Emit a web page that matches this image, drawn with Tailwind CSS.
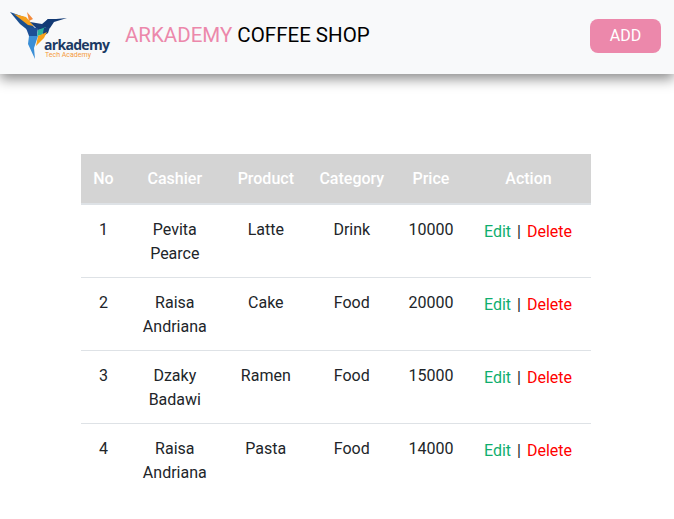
<!DOCTYPE html>
<html lang="en">
<head>
  <meta charset="UTF-8" />
  <meta name="viewport" content="width=device-width, initial-scale=1.0" />
  <title>Arkademy Coffee Shop</title>
  <script src="https://cdn.jsdelivr.net/npm/@tailwindcss/browser@4"></script>
</head>
<body class="min-h-screen bg-white font-['Roboto',sans-serif] text-[16px] leading-6 text-[#212529] overflow-hidden">

  <!-- navbar -->
  <nav class="flex items-center justify-between h-[74px] pl-[10px] pr-[13px] bg-[#f8f9fa] shadow-[0_5px_12px_rgba(0,0,0,0.45)]">
    <div class="flex items-center">
      <div class="relative w-[102px] h-[52px] -mt-[4px]">
        <svg class="absolute left-0 top-0" width="60" height="52" viewBox="10 9 60 52">
          <polygon points="10,12 24,17 36,29 30,32 20,24" fill="#1b4f8f"/>
          <polygon points="14,14 26,17 34,26 28,25" fill="#f7a11a"/>
          <polygon points="27,12 33,19 29,21" fill="#f48a3c"/>
          <polygon points="30,22 42,24 48,19 50,28 38,30" fill="#173f7a"/>
          <polygon points="42,26 48,19 56,19 67,18 54,22 50,28" fill="#123a74"/>
          <polygon points="26,28 38,28 37,36 29,36" fill="#1c4f96"/>
          <polygon points="38,30 46,27 42,35 37,36" fill="#2bb29c"/>
          <polygon points="44,28 50,27 48,33 42,37" fill="#173f7a"/>
          <polygon points="38,36 47,32 44,38 36,46" fill="#f7a11a"/>
          <polygon points="29,36 38,36 34,48 35,59 28,44" fill="#3b8fd6"/>
        </svg>
        <span class="absolute left-[34px] top-[30px] font-['Open_Sans',sans-serif] font-bold text-[14px] leading-[12px] tracking-[-0.7px] text-[#1b3a63]">arkademy</span>
        <span class="absolute left-[35px] top-[43px] text-[7px] leading-[7px] text-[#f59a3c]">Tech Academy</span>
      </div>
      <h1 class="ml-[13px] -mt-[4px] text-[20.5px] leading-[30px] font-normal text-black"><span class="text-[#ec88ab]">ARKADEMY</span> COFFEE SHOP</h1>
    </div>
    <button class="w-[71px] h-[34px] -mt-[3px] rounded-[8px] bg-[#ec88ab] text-white">ADD</button>
  </nav>

  <!-- table -->
  <div class="ml-[81px] mt-[80px] w-[510px]">
    <table class="w-full table-fixed border-collapse text-center">
      <thead>
        <tr class="h-[50px] bg-[#d4d4d4] text-white border-b-2 border-[#dee2e6]">
          <th class="w-[44.8px] pt-[13px] align-top font-medium">No</th>
          <th class="w-[98px] pt-[13px] align-top font-medium">Cashier</th>
          <th class="w-[84px] pt-[13px] align-top font-medium">Product</th>
          <th class="w-[88px] pt-[13px] align-top font-medium">Category</th>
          <th class="w-[70.2px] pt-[13px] align-top font-medium">Price</th>
          <th class="w-[125px] pt-[13px] align-top font-medium">Action</th>
        </tr>
      </thead>
      <tbody>
        <tr class="border-b border-[#dee2e6]">
          <td class="pt-[13px] pb-[11px] align-top">1</td>
          <td class="pt-[13px] pb-[11px] px-3 align-top">Pevita Pearce</td>
          <td class="pt-[13px] pb-[11px] align-top">Latte</td>
          <td class="pt-[13px] pb-[11px] align-top">Drink</td>
          <td class="pt-[13px] pb-[11px] align-top">10000</td>
          <td class="pt-[15px] pb-[9px] pr-[1px] align-top"><span class="text-[#0fae6e]">Edit</span> <span class="mx-[2px]">|</span> <span class="text-[#f00]">Delete</span></td>
        </tr>
        <tr class="border-b border-[#dee2e6]">
          <td class="pt-[13px] pb-[11px] align-top">2</td>
          <td class="pt-[13px] pb-[11px] px-3 align-top">Raisa Andriana</td>
          <td class="pt-[13px] pb-[11px] align-top">Cake</td>
          <td class="pt-[13px] pb-[11px] align-top">Food</td>
          <td class="pt-[13px] pb-[11px] align-top">20000</td>
          <td class="pt-[15px] pb-[9px] pr-[1px] align-top"><span class="text-[#0fae6e]">Edit</span> <span class="mx-[2px]">|</span> <span class="text-[#f00]">Delete</span></td>
        </tr>
        <tr class="border-b border-[#dee2e6]">
          <td class="pt-[13px] pb-[11px] align-top">3</td>
          <td class="pt-[13px] pb-[11px] px-3 align-top">Dzaky Badawi</td>
          <td class="pt-[13px] pb-[11px] align-top">Ramen</td>
          <td class="pt-[13px] pb-[11px] align-top">Food</td>
          <td class="pt-[13px] pb-[11px] align-top">15000</td>
          <td class="pt-[15px] pb-[9px] pr-[1px] align-top"><span class="text-[#0fae6e]">Edit</span> <span class="mx-[2px]">|</span> <span class="text-[#f00]">Delete</span></td>
        </tr>
        <tr>
          <td class="pt-[13px] pb-[11px] align-top">4</td>
          <td class="pt-[13px] pb-[11px] px-3 align-top">Raisa Andriana</td>
          <td class="pt-[13px] pb-[11px] align-top">Pasta</td>
          <td class="pt-[13px] pb-[11px] align-top">Food</td>
          <td class="pt-[13px] pb-[11px] align-top">14000</td>
          <td class="pt-[15px] pb-[9px] pr-[1px] align-top"><span class="text-[#0fae6e]">Edit</span> <span class="mx-[2px]">|</span> <span class="text-[#f00]">Delete</span></td>
        </tr>
      </tbody>
    </table>
  </div>

</body>
</html>
